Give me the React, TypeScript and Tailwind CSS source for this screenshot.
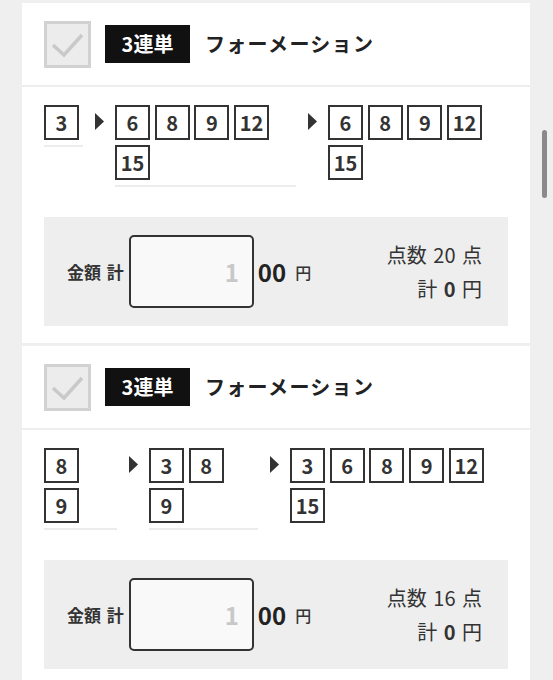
type Column = { nums: string[]; width: string; line: boolean };

type Bet = { columns: Column[]; points: number };

const bets: Bet[] = [
  {
    points: 20,
    columns: [
      { nums: ['3'], width: 'w-[39px]', line: true },
      { nums: ['6', '8', '9', '12', '15'], width: 'w-[181px]', line: true },
      { nums: ['6', '8', '9', '12', '15'], width: 'flex-1', line: false },
    ],
  },
  {
    points: 16,
    columns: [
      { nums: ['8', '9'], width: 'w-[73px]', line: true },
      { nums: ['3', '8', '9'], width: 'w-[109px]', line: true },
      { nums: ['3', '6', '8', '9', '12', '15'], width: 'flex-1', line: false },
    ],
  },
];

function CheckBox() {
  return (
    <div className="w-[47px] h-[47px] border-[3px] border-[#d2d2d2] bg-[#ececec] shrink-0">
      <svg width="41" height="41" viewBox="0 0 41 41">
        <polyline
          points="6,21 17,31 35,11"
          fill="none"
          stroke="#c9c9c9"
          strokeWidth="3.5"
        />
      </svg>
    </div>
  );
}

function Arrow() {
  return (
    <svg width="9" height="17" viewBox="0 0 9 17" className="ml-[12px] mr-[11px] mt-[8px] shrink-0">
      <polygon points="0,0 9,8.5 0,17" fill="#333" />
    </svg>
  );
}

function BetCard({ bet }: { bet: Bet }) {
  return (
    <div className="bg-white">
      {/* ヘッダー */}
      <div className="h-[82px] flex items-center px-[22px]">
        <CheckBox />
        <div className="ml-[14px] w-[85px] h-[38px] bg-[#111] text-white text-[20px] font-bold flex items-center justify-center">
          3連単
        </div>
        <div className="ml-[15px] text-[20px] font-semibold text-[#222] tracking-[1.3px]">
          フォーメーション
        </div>
      </div>
      <div className="h-[2px] bg-[#eeeeee]" />

      {/* 選択番号 */}
      <div className="px-[22px] pt-[18px] flex items-start">
        {bet.columns.map((col, i) => (
          <div key={i} className="flex items-start">
            {i > 0 && <Arrow />}
            <div
              className={`${col.width} flex flex-wrap gap-x-[4.7px] gap-y-[5px] pb-[5px] ${
                col.line ? 'border-b-2 border-[#ececec]' : ''
              }`}
            >
              {col.nums.map((n) => (
                <div
                  key={n}
                  className="w-[35px] h-[35px] border-2 border-[#333] flex items-center justify-center text-[20px] font-bold text-[#333] leading-none"
                >
                  {n}
                </div>
              ))}
            </div>
          </div>
        ))}
      </div>

      {/* 金額 */}
      <div className="px-[22px] pt-[30px] pb-[17px]">
        <div className="h-[109px] bg-[#eeeeee] flex items-center pl-[23px] pr-[26px]">
          <span className="text-[17px] font-bold text-[#333] mr-[5px] [word-spacing:2px]">金額 計</span>
          <div className="w-[125px] h-[73px] border-2 border-[#333] rounded-[5px] bg-[#f9f9f9] flex items-center justify-end pr-[13px] text-[24px] font-bold text-[#c8c8c8]">
            1
          </div>
          <span className="ml-[4px] text-[24px] font-bold text-[#222]">00</span>
          <span className="ml-[9px] text-[16px] font-medium text-[#333]">円</span>
          <div className="ml-auto text-right text-[20px] text-[#333] leading-[34px] [word-spacing:2px]">
            <div>点数 {bet.points} 点</div>
            <div>
              計 <span className="font-bold">0</span> 円
            </div>
          </div>
        </div>
      </div>
    </div>
  );
}

export default function App() {
  return (
    <div className="relative h-[680px] overflow-hidden bg-[#efefef] font-['Noto_Sans_CJK_JP','Noto_Sans',sans-serif]">
      <div className="pl-[22px] pr-[23px] pt-[3px] flex flex-col gap-[3px]">
        {bets.map((bet, i) => (
          <BetCard key={i} bet={bet} />
        ))}
      </div>
      {/* スクロールバー */}
      <div className="absolute right-[6px] top-[130px] w-[5px] h-[68px] rounded-full bg-[#8a8a8a]" />
    </div>
  );
}
